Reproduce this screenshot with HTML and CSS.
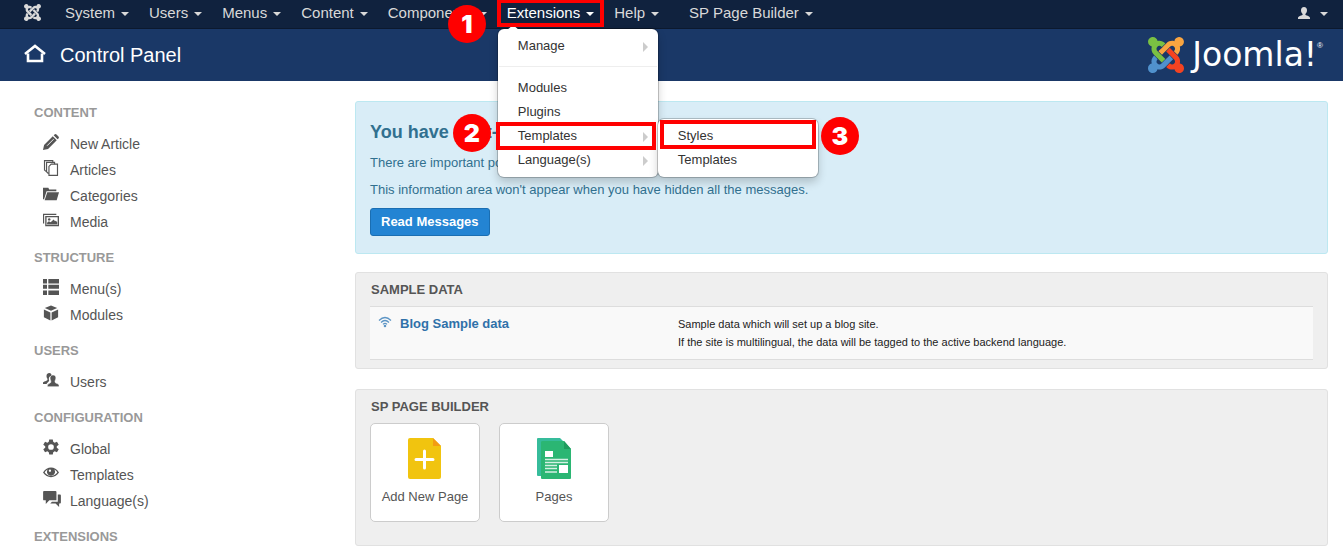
FILE: index.html
```html
<!DOCTYPE html>
<html lang="en">
<head>
<meta charset="utf-8">
<title>Control Panel</title>
<link rel="stylesheet" href="styles.css">
</head>
<body>
<svg class="sprite" aria-hidden="true">
  <symbol id="joomla" viewBox="0 32 448 448">
    <path class="j-green" d="M.6 92.1C.6 58.8 27.4 32 60.4 32c30 0 54.5 21.9 59.2 50.2 32.6-7.6 67.1.6 96.5 30l-44.3 44.3c-20.5-20.5-42.6-16.3-55.4-3.5-14.3 14.3-14.3 37.9 0 52.2l99.5 99.5-44 44.3c-87.7-87.2-49.7-49.7-99.8-99.7-26.8-26.5-35-64.8-24.8-98.9C20.4 144.6.6 120.7.6 92.1z"/>
    <path class="j-orange" d="M130.1 208.5l44.3 44.3c10-10 89.7-89.7 99.7-99.8 14.3-14.3 37.6-14.3 51.9 0 12.8 12.8 17 35-3.500 55.4l44 44.3c31.2-31.2 38.5-67.6 28.9-101.2 29.2-4.1 51.9-29.2 51.9-59.5 0-33.2-26.8-60.1-59.8-60.1-30.3 0-55.4 22.5-59.5 51.6-33.8-9.9-71.7-1.5-98.3 25.1-18.3 19.1-71.1 71.5-99.6 99.9z"/>
    <path class="j-red" d="M396.4 360.7c8.2-32.7-.9-68.5-26.3-93.9-11.8-12.2 5 4.7-99.5-99.7l-44.3 44.3 99.7 99.7c14.3 14.3 14.3 37.6 0 51.9-12.8 12.8-35 17-55.4-3.5l-44 44.3c27.6 30.2 68 38.8 102.7 28 5.5 27.4 29.7 48.1 58.9 48.1 33 0 59.8-26.8 59.8-60.1 0-30.2-22.5-55-51.6-59.1z"/>
    <path class="j-blue" d="M312.1 307.6l-44-44.3c-87 86.4-50.4 50.4-99.7 99.8-14.3 14.3-37.6 14.3-51.9 0-13.1-13.4-16.9-35.3 3.2-55.4l-44-44.3c-30.2 30.2-38 65.2-29.5 98.3-26.7 6-46.2 29.9-46.2 58.2C0 453.2 26.8 480 59.8 480c28.6 0 52.5-19.8 58.6-46.7 32.7 8.2 68.5-.6 94.2-26 32.1-32 12.2-12.4 99.5-99.7z"/>
  </symbol>
</svg>

<nav class="topbar">
  <a class="site-link" href="#" aria-label="Joomla"><svg class="site-icon"><use href="#joomla"/></svg></a>
  <ul class="menu">
    <li><a href="#">System<span class="caret"></span></a></li>
    <li><a href="#">Users<span class="caret"></span></a></li>
    <li><a href="#">Menus<span class="caret"></span></a></li>
    <li><a href="#">Content<span class="caret"></span></a></li>
    <li><a href="#">Components<span class="caret"></span></a></li>
    <li class="open">
      <a href="#">Extensions<span class="caret"></span></a>
      <span class="frame"></span>
      <span class="step step-one">1</span>
      <ul class="dropdown">
        <li class="has-sub"><a href="#">Manage</a></li>
        <li class="divider"></li>
        <li><a href="#">Modules</a></li>
        <li><a href="#">Plugins</a></li>
        <li class="has-sub">
          <a href="#">Templates</a>
          <span class="frame"></span>
          <span class="step step-two">2</span>
          <ul class="dropdown submenu">
            <li>
              <a href="#">Styles</a>
              <span class="frame"></span>
              <span class="step step-three">3</span>
            </li>
            <li><a href="#">Templates</a></li>
          </ul>
        </li>
        <li class="has-sub"><a href="#">Language(s)</a></li>
      </ul>
    </li>
    <li><a href="#">Help<span class="caret"></span></a></li>
    <li class="builder"><a href="#">SP Page Builder<span class="caret"></span></a></li>
  </ul>
  <a class="account" href="#" aria-label="User menu">
    <svg width="12" height="12" viewBox="0 0 12 12" fill="#d9d9d9"><path d="M6 0c2 0 3 1.300 3 3.200C9 4.900 8.200 6.200 7.400 6.900v.9c0 .7 4.600 1.200 4.600 3.200v1H0v-1c0-2 4.600-2.500 4.600-3.200v-.9C3.800 6.200 3 4.900 3 3.200 3 1.300 4 0 6 0z"/></svg>
    <span class="caret"></span>
  </a>
</nav>

<header class="header">
  <svg class="home" width="22" height="19" viewBox="0 0 22 19" fill="none" stroke="#fff"><path d="M1 10 11 2l10 8" stroke-width="2.600"/><path d="M4 9.500V17h14V9.500" stroke-width="2.600"/></svg>
  <h1>Control Panel</h1>
  <div class="logo"><svg class="logo-mark"><use href="#joomla"/></svg><span class="logo-name">Joomla!</span><span class="logo-reg">®</span></div>
</header>

<div class="page">
  <aside class="sidebar">
    <h2>CONTENT</h2>
    <ul>
      <li><a href="#"><svg viewBox="0 0 18 18"><path d="M0 18l1.200-5.700L11 2.500l4.500 4.500L5.700 16.800z"/><path d="M12 1.500 13 .6q1.200-1 2.200 0l2.200 2.200q1 1.200 0 2.200l-1 1z"/><path d="M4.600 13.200 12 5.800" stroke="#fff" stroke-width="1"/></svg>New Article</a></li>
      <li><a href="#"><svg viewBox="0 0 18 18"><g fill="#fff" stroke="#555" stroke-width="1.300"><path d="M1.700 .700h9.300v12H3.200l-1.500-1.500z"/><path d="M4 2.700h9v12H5.500L4 13.200z"/><path d="M9.200 4.700h7.100v12.600H6.700V7.200z"/></g></svg>Articles</a></li>
      <li><a href="#"><svg viewBox="0 0 18 18"><path d="M0 2h6l1 2h8v2H4L1.200 15H0z"/><path d="M4.800 7H18l-2.600 9H1.800z"/></svg>Categories</a></li>
      <li><a href="#"><svg viewBox="0 0 18 18"><path d="M0 2h15v1.300H1.300V13H0z"/><path fill-rule="evenodd" d="M2.500 4.500H18V16H2.500zM4 6v8.500h12.500V6z"/><circle cx="7" cy="8.300" r="1.400"/><path d="M4.600 14v-2l2-1.500 2 1 3.400-3 1.500 2 1-.7 1.500 1.700V14z"/></svg>Media</a></li>
    </ul>
    <h2>STRUCTURE</h2>
    <ul>
      <li><a href="#"><svg viewBox="0 0 18 18"><path d="M0 0h4.500v5H0zM6 0h12v5H6zM0 6.500h4.500v4.500H0zM6 6.500h12v4.500H6zM0 13h4.500v5H0zM6 13h12v5H6z"/></svg>Menu(s)</a></li>
      <li><a href="#"><svg viewBox="0 0 18 18"><path d="M9 .500l7 2.800-7 3.200L2 3.300zM1 5l7.300 3.300V17.500L1 13.700zM17 5l-7.300 3.300V17.500l7.300-3.800z"/></svg>Modules</a></li>
    </ul>
    <h2>USERS</h2>
    <ul>
      <li><a href="#"><svg viewBox="0 0 18 18"><path d="M7 1c2 0 3 1.500 2.600 3.500C7 4.500 6 7 7 9.700c-1 2-2.500 2.800-3 3.800H0v-1.300C0 10.500 5 10 5 9V7.500C3.300 5.500 3.500 1 7 1z"/><path d="M11.300 3.500c3 0 4.200 3 2.200 6.500v1.500c0 1 4.500 1.500 4.500 3.500v1.500H5V15c0-2 3.800-2.500 3.800-3.500V10C7 6.500 8.300 3.500 11.300 3.500z" stroke="#fff" stroke-width=".6"/></svg>Users</a></li>
    </ul>
    <h2>CONFIGURATION</h2>
    <ul>
      <li><a href="#"><svg viewBox="0 0 18 16"><path fill-rule="evenodd" d="M7 -.500h4l.5 2.700 1.600.9 2.600-.9 2 3.300L15.500 7.200v1.600l2.200 1.700-2 3.300-2.600-.9-1.600.9-.5 2.700H7l-.5-2.700-1.600-.9-2.600.9-2-3.300 2.200-1.700V7.200L.3 5.500l2-3.300 2.600.9 1.600-.9zM9 4.800a3.200 3.200 0 1 0 0 6.400 3.200 3.200 0 0 0 0-6.400z"/></svg>Global</a></li>
      <li><a href="#"><svg viewBox="0 0 18 18"><path fill-rule="evenodd" d="M0 8.500C4.500 1 13.500 1 18 8.500 13.500 15.500 4.500 15.500 0 8.500zm1.900 0c4 5.200 10.200 5.200 14.200 0C15 6.700 13.800 5.700 12.600 5.200 15 8.500 12.500 12 9 12S3 8.500 5.400 5.200C4.200 5.700 3 6.700 1.900 8.500z"/><circle cx="9" cy="7.700" r="3.700"/><circle cx="7.800" cy="6.500" r="1.300" fill="#fff"/></svg>Templates</a></li>
      <li><a href="#"><svg class="wide" viewBox="0 0 20 18"><path d="M1 0h13q1 0 1 1v9.500H7l-4 4v-4H1q-1 0-1-1V1q0-1 1-1z"/><path d="M16.500 4H19q1 0 1 1v8q0 1-1 1h-1v4l-4-4H8l2-2h6.500z"/></svg>Language(s)</a></li>
    </ul>
    <h2>EXTENSIONS</h2>
  </aside>

  <main class="main">
    <section class="alert">
      <h2>You have post-installation messages</h2>
      <p>There are important post-installation messages that require your attention.</p>
      <p>This information area won't appear when you have hidden all the messages.</p>
      <a class="button" href="#">Read Messages</a>
    </section>

    <section class="well">
      <h2>SAMPLE DATA</h2>
      <div class="sample">
        <a href="#"><svg width="14" height="12" viewBox="0 0 14 12" fill="none" stroke="#5d95c5" stroke-width="1.200"><path d="M1 4.500q6-6 12 0M3 6.500q4-4 8 0M5 8.300q2-2 4 0"/><circle cx="7" cy="10" r=".7" fill="#3071a9"/></svg>Blog Sample data</a>
        <p>Sample data which will set up a blog site.<br>If the site is multilingual, the data will be tagged to the active backend language.</p>
      </div>
    </section>

    <section class="well last">
      <h2>SP PAGE BUILDER</h2>
      <div class="tiles">
        <a href="#"><svg width="34" height="41" viewBox="0 0 34 41"><path d="M2 0h23l8 8v31q0 2-2 2H2q-2 0-2-2V2q0-2 2-2z" fill="#f1c40f"/><path d="M25 0l8 8h-8z" fill="#f39c12"/><path d="M16.500 13v17M8 21.500h17" stroke="#fff" stroke-width="3" stroke-linecap="round"/></svg>Add New Page</a>
        <a href="#"><svg width="34" height="41" viewBox="0 0 34 41"><path d="M1 0h22l8 8v30H1q-1 0-1-1V1q0-1 1-1z" fill="#36bc9b"/><path d="M6 3h21l7 8v29q0 1-1 1H5q-1 0-1-1V4q0-1 2-1z" fill="#2bb673"/><path d="M27 3v8h7z" fill="#1f9c5e"/><path d="M8 13h8v6H8zM22 27h9v8h-9z" fill="#fff"/><path d="M8 21.500h23M8 24.500h23M8 27.500h12M8 30.500h12M8 34h12" stroke="#d5f0e3" stroke-width="1.500"/></svg>Pages</a>
      </div>
    </section>
  </main>
</div>
</body>
</html>
```
FILE: styles.css
```css
* { box-sizing: border-box; }
body {
  margin: 0;
  background: #fff;
  color: #555;
  font: 13px/18px "Liberation Sans", Arial, sans-serif;
}
ul { list-style: none; margin: 0; padding: 0; }
h1, h2, p { margin: 0; }
a { color: inherit; text-decoration: none; }
.sprite { position: absolute; width: 0; height: 0; }
.j-green { fill: var(--green, #d9d9d9); }
.j-orange { fill: var(--orange, #d9d9d9); }
.j-red { fill: var(--red, #d9d9d9); }
.j-blue { fill: var(--blue, #d9d9d9); }

.topbar {
  display: flex;
  align-items: center;
  padding: 0 15px 0 24px;
  background: #10223e;
  border-bottom: 1px solid #0c192e;
  color: #d9d9d9;
  font-size: 15px;
}
.site-link { display: flex; margin: 0 14px 3px 0; }
.site-icon { width: 17px; height: 17px; }
.menu { display: flex; }
.menu > li { position: relative; }
.menu > li > a { display: flex; align-items: center; padding: 0 10px 2px; line-height: 26px; }
.menu > .open > a { color: #fff; }
.menu > .builder { margin-left: 10px; }
.caret {
  margin: 2px 0 0 6px;
  border: 4px solid transparent;
  border-top-color: currentColor;
  border-bottom: 0;
}
.account { display: flex; align-items: center; margin: 0 0 3px auto; }
.account .caret { margin-left: 10px; }

.dropdown {
  position: absolute;
  z-index: 10;
  top: 29px;
  left: 1px;
  width: 160px;
  padding: 5px 0;
  background: #fff;
  border-radius: 6px;
  box-shadow: 0 0 0 1px rgba(0, 0, 0, .2), 0 5px 10px rgba(0, 0, 0, .2);
  color: #333;
  font-size: 13px;
}
.menu > .open > .dropdown::before {
  content: "";
  position: absolute;
  top: -4px;
  left: 9px;
  border: 6px solid transparent;
  border-top: 0;
  border-bottom: 5px solid #fff;
}
.dropdown li { position: relative; }
.dropdown a { display: block; padding: 0 20px; line-height: 24px; }
.dropdown .divider { height: 1px; margin: 8px 1px 9px; background: #eee; }
.has-sub::after {
  content: "";
  position: absolute;
  top: 8px;
  right: 10px;
  border: 5px solid transparent;
  border-left-color: #ccc;
  border-right: 0;
}
.dropdown.submenu { top: -5px; left: 160px; }

.frame { position: absolute; z-index: 20; border: 4px solid #f00; pointer-events: none; }
.open > .frame { inset: -1px 0 1px 0; }
.has-sub > .frame { inset: -2px 2px -2px -2px; }
.submenu .frame { inset: -4px 2px -1px 2px; }
.step {
  position: absolute;
  z-index: 30;
  width: 38px;
  height: 38px;
  border-radius: 50%;
  background: #f00;
  color: #fff;
  font: 900 25px/38px Inter, sans-serif;
  text-align: center;
}
.step-one { top: 5px; left: -49px; }
.step-two { top: -10px; left: -45px; }
.step-three { top: -7px; left: 163px; }

.header {
  display: flex;
  align-items: center;
  height: 52px;
  padding: 0 20px 0 24px;
  background: #1a3867;
  color: #fff;
}
.home { margin: 0 14px 4px 0; }
.header h1 { font-size: 20px; font-weight: 400; line-height: 36px; }
.logo {
  --green: #7ac143;
  --orange: #f9a541;
  --red: #f44321;
  --blue: #5091cd;
  display: flex;
  align-items: center;
  margin-left: auto;
}
.logo-mark { width: 36px; height: 36px; margin-right: 8px; }
.logo-name { font: 400 33px/36px "DejaVu Sans", sans-serif; }
.logo-reg { align-self: flex-start; font-size: 8px; line-height: 18px; }

.page {
  display: grid;
  grid-template-columns: 321px minmax(0, 1fr);
  padding: 20px 15px 4px 34px;
}
.sidebar h2 { margin: 13px 0 8px; color: #999; font-size: 13px; line-height: 20px; }
.sidebar h2:first-child { margin-top: 2px; }
.sidebar a { display: flex; align-items: center; padding-left: 9px; font-size: 14px; line-height: 26px; }
.sidebar svg { width: 16px; height: 16px; margin: 0 11px 4px 0; fill: #555; }
.sidebar .wide { width: 18px; margin-right: 9px; }

.alert {
  margin-bottom: 18px;
  padding: 20px 14px 17px;
  background: #d9edf7;
  border: 1px solid #bce8f1;
  border-radius: 3px;
  color: #31708f;
}
.alert h2 { margin-bottom: 12px; font-size: 18px; line-height: 20px; }
.alert p { margin-bottom: 9px; }
.button {
  display: inline-block;
  padding: 4px 10px;
  background: #2384d3;
  border: 1px solid #1a6eb2;
  border-radius: 3px;
  color: #fff;
  font-weight: 700;
}
.well {
  margin-bottom: 20px;
  padding: 8px 14px;
  background: #efefef;
  border: 1px solid #e1e1e1;
  border-radius: 3px;
}
.well h2 { margin-left: 1px; font-size: 13px; line-height: 18px; }
.sample {
  display: grid;
  grid-template-columns: 300px 1fr;
  margin-top: 7px;
  padding: 8px;
  background: #f9f9f9;
  border: solid #ddd;
  border-width: 1px 0;
}
.sample a { color: #3071a9; font-weight: 700; }
.sample svg { margin-right: 8px; }
.sample p { color: #222; font-size: 11px; }
.well.last { margin-bottom: 0; padding-bottom: 23px; }
.tiles { display: flex; gap: 19px; margin-top: 7px; }
.tiles a {
  display: flex;
  flex-direction: column;
  align-items: center;
  gap: 9px;
  width: 110px;
  padding: 14px 0 15px;
  background: #fff;
  border: 1px solid #ccc;
  border-radius: 5px;
}
```
